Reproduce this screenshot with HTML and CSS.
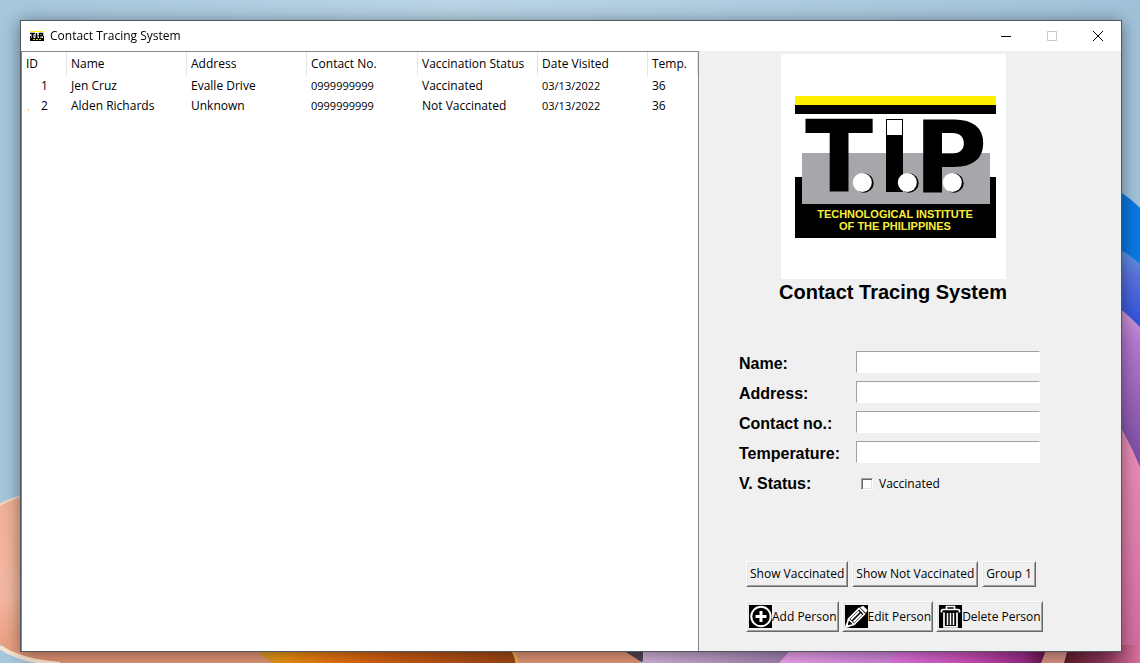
FILE: index.html
```html
<!DOCTYPE html>
<html lang="en">
<head>
<meta charset="utf-8">
<title>Contact Tracing System</title>
<link rel="stylesheet" href="styles.css">
</head>
<body>
<svg class="wallpaper" viewBox="0 0 1140 663" preserveAspectRatio="none" aria-hidden="true">
  <defs>
    <linearGradient id="sky" x1="0" y1="0" x2="1" y2="0">
      <stop offset="0" stop-color="#a5c6dc"/><stop offset=".4" stop-color="#b9d4e6"/><stop offset="1" stop-color="#a0c2d9"/>
    </linearGradient>
    <linearGradient id="violet" x1="0" y1="0" x2="0" y2="1">
      <stop offset="0" stop-color="#e0a8d8"/><stop offset=".25" stop-color="#b478d0"/><stop offset="1" stop-color="#74479c"/>
    </linearGradient>
    <linearGradient id="indigo" x1="0" y1="0" x2="0" y2="1">
      <stop offset="0" stop-color="#62a8e6"/><stop offset=".35" stop-color="#5a72dc"/><stop offset="1" stop-color="#2348e0"/>
    </linearGradient>
    <linearGradient id="pink" x1="0" y1="0" x2="0" y2="1">
      <stop offset="0" stop-color="#f094bc"/><stop offset="1" stop-color="#cf6a9c"/>
    </linearGradient>
    <linearGradient id="peach" x1="0" y1="0" x2="0" y2="1">
      <stop offset="0" stop-color="#f0b094"/><stop offset=".6" stop-color="#f4b8a2"/><stop offset="1" stop-color="#e89878"/>
    </linearGradient>
    <linearGradient id="orange" x1="0" y1="0" x2="1" y2="0">
      <stop offset="0" stop-color="#d8a030"/><stop offset=".12" stop-color="#ee9410"/><stop offset=".3" stop-color="#e87410"/><stop offset=".55" stop-color="#cc5c12"/><stop offset="1" stop-color="#9c4616"/>
    </linearGradient>
    <linearGradient id="lilac" x1="0" y1="0" x2="1" y2="0">
      <stop offset="0" stop-color="#d4b4dc"/><stop offset="1" stop-color="#a07cac"/>
    </linearGradient>
    <linearGradient id="orchid" x1="0" y1="0" x2="1" y2="0">
      <stop offset="0" stop-color="#f0a4f0"/><stop offset="1" stop-color="#cc7ed4"/>
    </linearGradient>
    <linearGradient id="magenta" x1="0" y1="0" x2="1" y2="0">
      <stop offset="0" stop-color="#e478e4"/><stop offset=".5" stop-color="#cc50b8"/><stop offset=".85" stop-color="#9c2c88"/><stop offset="1" stop-color="#601040"/>
    </linearGradient>
    <linearGradient id="maroon" x1="0" y1="0" x2="1" y2="0">
      <stop offset="0" stop-color="#5c1c28"/><stop offset=".5" stop-color="#8c3458"/><stop offset="1" stop-color="#d8709c"/>
    </linearGradient>
  </defs>
  <rect width="1140" height="663" fill="url(#sky)"/>
  <path d="M1100 182Q1125 192 1140 208V270H1100Z" fill="#0a78e2"/>
  <path d="M1100 240Q1122 248 1140 264V340H1100Z" fill="url(#indigo)"/>
  <path d="M1100 295Q1122 308 1140 327V480H1100Z" fill="url(#violet)"/>
  <path d="M1100 395Q1125 430 1140 467V663H1100Z" fill="url(#pink)"/>
  <path d="M0 505Q12 497 40 492V663H55Q20 660 0 644Z" fill="url(#peach)"/>
  <path d="M0 505Q12 497 40 492" fill="none" stroke="#f6d8c4" stroke-width="2"/>
  <path d="M20 645H640V663H55Q35 661 20 654Z" fill="#e29474"/>
  <path d="M0 647Q20 661 60 664" fill="none" stroke="#fae6d0" stroke-width="4"/>
  <path d="M252 645Q262 658 274 663H517Q516 655 510 645Z" fill="url(#orange)"/>
  <path d="M510 645Q516 655 517 663" fill="none" stroke="#f0b050" stroke-width="3"/>
  <path d="M615 645L643 663V645Z" fill="#544454"/>
  <path d="M647 645L642 663H782L795 645Z" fill="url(#lilac)"/>
  <path d="M795 645L779 663H890L906 645Z" fill="url(#orchid)"/>
  <path d="M906 645L888 663H1042L1048 645Z" fill="url(#magenta)"/>
  <path d="M1048 645L1041 663H1064L1069 645Z" fill="#d89084"/>
  <path d="M1069 645L1064 663H1140V645Z" fill="url(#maroon)"/>
</svg>

<div class="window">
  <header class="titlebar">
    <svg class="app-icon" viewBox="0 0 14 12" aria-hidden="true">
      <rect y="1" width="14" height="1" fill="#fff000"/>
      <rect y="6" width="14" height="5"/><rect x="1" y="5" width="12" height="3" fill="#a7a7ab"/>
      <path d="M0 3.500h5M2.500 3v5M6.500 3v5M9.500 8V3.500h3v2h-3" fill="none" stroke="#000" stroke-width="1.500"/>
      <path d="M4 7.500h1M8 7.500h1M12 7.500h1" stroke="#fff"/><path d="M3 9.500h8" stroke="#e8dc20" stroke-dasharray="2 1"/>
    </svg>
    <h1 class="window-title">Contact Tracing System</h1>
    <div class="window-controls">
      <button class="control" aria-label="Minimize"><svg viewBox="0 0 10 10"><path d="M0 5.500h10"/></svg></button>
      <button class="control" aria-label="Maximize" disabled><svg viewBox="0 0 10 10"><path d="M.5.5h9v9h-9z"/></svg></button>
      <button class="control" aria-label="Close"><svg viewBox="0 0 10 10"><path d="M0 0l10 10M10 0L0 10"/></svg></button>
    </div>
  </header>

  <main class="content">
    <section class="records">
      <table class="people">
        <colgroup><col class="col-id"><col class="col-wide"><col class="col-wide"><col class="col-contact"><col class="col-wide"><col class="col-date"><col class="col-temp"></colgroup>
        <thead>
          <tr><th>ID</th><th>Name</th><th>Address</th><th>Contact No.</th><th>Vaccination Status</th><th>Date Visited</th><th>Temp.</th></tr>
        </thead>
        <tbody>
          <tr><td>1</td><td>Jen Cruz</td><td>Evalle Drive</td><td class="digits">0999999999</td><td>Vaccinated</td><td class="digits">03/13/2022</td><td>36</td></tr>
          <tr class="marked"><td>2</td><td>Alden Richards</td><td>Unknown</td><td class="digits">0999999999</td><td>Not Vaccinated</td><td class="digits">03/13/2022</td><td>36</td></tr>
        </tbody>
      </table>
    </section>

    <aside class="panel">
      <svg class="logo" viewBox="0 0 225 225" role="img" aria-label="Technological Institute of the Philippines">
        <rect width="225" height="225" fill="#fff"/>
        <rect x="14" y="42" width="201" height="9" fill="#fff000"/>
        <rect x="14" y="51" width="201" height="9"/>
        <rect x="14" y="123" width="201" height="61"/>
        <rect x="21" y="99" width="188" height="51" fill="#a7a7ab"/>
        <text class="logo-letter" x="24" y="138">T</text>
        <rect x="105" y="65" width="17" height="73"/>
        <rect x="106" y="66" width="15" height="15" fill="#fff"/>
        <text class="logo-letter" x="133" y="138">P</text>
        <g><circle cx="83" cy="129" r="9.700"/><circle cx="128" cy="129" r="9.700"/><circle cx="173" cy="129" r="9.700"/></g>
        <g fill="#fff"><circle cx="81.300" cy="128.500" r="9.500"/><circle cx="126.300" cy="128.500" r="9.500"/><circle cx="171.300" cy="128.500" r="9.500"/></g>
        <text class="logo-name" x="114" y="164">TECHNOLOGICAL INSTITUTE</text>
        <text class="logo-name" x="114" y="176">OF THE PHILIPPINES</text>
      </svg>
      <h2 class="panel-title">Contact Tracing System</h2>

      <form class="form">
        <label for="name">Name:</label><input class="field" id="name" type="text">
        <label for="address">Address:</label><input class="field" id="address" type="text">
        <label for="contact">Contact no.:</label><input class="field" id="contact" type="text">
        <label for="temperature">Temperature:</label><input class="field" id="temperature" type="text">
        <span class="status-label">V. Status:</span>
        <label class="check"><input class="checkbox" type="checkbox">Vaccinated</label>
      </form>

      <div class="actions">
        <div class="filters">
          <button class="button">Show Vaccinated</button>
          <button class="button">Show Not Vaccinated</button>
          <button class="button">Group 1</button>
        </div>
        <div class="edits">
          <button class="button with-icon">
            <svg viewBox="0 0 23 23" aria-hidden="true"><rect width="23" height="23"/><circle cx="12" cy="11.500" r="9.700" fill="none" stroke="#fff" stroke-width="2"/><path d="M12 6v11M6.500 11.500h11" stroke="#fff" stroke-width="3"/></svg>Add Person</button>
          <button class="button with-icon">
            <svg viewBox="0 0 23 23" aria-hidden="true"><rect width="23" height="23"/><path d="M15 2.500L18 .8L22.500 5L21 8Z" fill="#fff"/><path d="M1.500 21.500L3.500 14L14 3.500L19.500 9L9 19.500ZM3.500 14L9 19.500" fill="none" stroke="#fff" stroke-width="1.600"/><path d="M6 14.500L14 6.500M8.500 17L16.500 9" stroke="#fff" stroke-width="1.800"/><path d="M0 23l1-5 4 4z" fill="#fff"/></svg>Edit Person</button>
          <button class="button with-icon">
            <svg viewBox="0 0 23 23" aria-hidden="true"><rect width="23" height="23"/><path d="M2.500 7.500V5.500Q2.500 4.500 4 4.500H19Q20.500 4.500 20.500 5.500V7.500M7.500 4V1.500H15.500V4M5 7.500V21.800H18V7.500" fill="none" stroke="#fff" stroke-width="1.700"/><path d="M8.500 8V20M11.500 8V20M14.500 8V20" stroke="#fff" stroke-width="1.500"/></svg>Delete Person</button>
        </div>
      </div>
    </aside>
  </main>
</div>
</body>
</html>
```
FILE: styles.css
```css
* {
  box-sizing: border-box;
}

body {
  margin: 0;
  min-height: 100vh;
  padding: 20px 19px 11px 20px;
  display: flex;
  font: 12px/16px "Open Sans", "Noto Sans", sans-serif;
  color: #000;
}

/* Desktop picture behind the window */
.wallpaper {
  position: fixed;
  inset: 0;
  width: 100%;
  height: 100%;
  z-index: -1;
}

.window {
  flex: 1;
  display: flex;
  flex-direction: column;
  border: 1px solid #50585f;
  background: #fff;
  box-shadow: 0 2px 16px rgba(0, 0, 0, 0.45);
}

.titlebar {
  display: flex;
  align-items: center;
  height: 30px;
  padding-left: 9px;
  gap: 6px;
}

.app-icon {
  width: 14px;
  height: 12px;
}

.window-title {
  margin: 0;
  font-size: 12px;
  font-weight: 400;
}

.window-controls {
  display: flex;
  align-self: stretch;
  margin-left: auto;
}

.control {
  display: grid;
  place-items: center;
  width: 46px;
  padding: 0;
  border: 0;
  background: none;
}

.control svg {
  width: 10px;
  height: 10px;
  fill: none;
  stroke: #000;
}

.control:disabled svg {
  stroke: #c8c8c8;
}

.content {
  flex: 1;
  display: flex;
  background: #f0f0f0;
}

.records {
  flex: 1;
  border: 1px solid #828790;
  border-bottom: 0;
  background: #fff;
}

.people {
  width: 100%;
  table-layout: fixed;
  border-spacing: 0;
}

.col-id { width: 45px; }
.col-wide { width: 120px; }
.col-contact { width: 111px; }
.col-date { width: 110px; }
.col-temp { width: 50px; }

.people th,
.people td {
  padding: 0 4px;
  font-weight: 400;
  text-align: left;
  white-space: nowrap;
}

.people th {
  height: 24px;
  border-right: 1px solid #e5e5e5;
}

.people td {
  height: 20px;
}

.people td:first-child {
  padding-left: 19px;
}

.people .digits {
  font-size: 11px;
}

.marked td:first-child {
  background: linear-gradient(#f8c070, #f8c070) 6px 13px / 1px 2px no-repeat;
}

.panel {
  width: 422px;
  display: flex;
  flex-direction: column;
  padding: 3px 40px 19px;
}

.logo {
  align-self: center;
  width: 225px;
  height: 225px;
  margin-right: 34px;
}

.logo-letter {
  font: bold 100px "DejaVu Sans", sans-serif;
}

.logo-name {
  font: bold 11px "Liberation Sans", Arial, sans-serif;
  fill: #f8ee38;
  text-anchor: middle;
}

.panel-title {
  margin: 0 34px 0 0;
  font: bold 20px/26px "Liberation Sans", Arial, sans-serif;
  text-align: center;
  white-space: nowrap;
}

.form {
  display: grid;
  grid-template-columns: 117px 184px;
  grid-auto-rows: 22px;
  row-gap: 8px;
  margin-top: 46px;
  font: bold 16px/26px "Liberation Sans", Arial, sans-serif;
}

.field {
  width: 100%;
  height: 22px;
  padding: 1px 2px;
  border: 1px solid #fff;
  border-top-color: #a0a0a0;
  border-left-color: #a0a0a0;
  background: #fff;
  font: 12px "Open Sans", sans-serif;
}

.check {
  display: flex;
  align-items: center;
  gap: 6px;
  padding: 3px 0 0 5px;
  font: 12px/16px "Open Sans", "Noto Sans", sans-serif;
}

.checkbox {
  appearance: none;
  width: 12px;
  height: 12px;
  margin: 0;
  border: 1px solid #fff;
  border-top-color: #a0a0a0;
  border-left-color: #a0a0a0;
  background: #fff;
  box-shadow: inset 1px 1px #696969, inset -1px -1px #e3e3e3;
}

.checkbox:checked {
  background: radial-gradient(#000 3px, #fff 3px);
}

.actions {
  display: grid;
  gap: 14px;
  margin-top: auto;
  padding-left: 7px;
}

.filters,
.edits {
  display: flex;
  gap: 4px;
}

.edits {
  gap: 3px;
}

.button {
  display: flex;
  align-items: center;
  height: 26px;
  padding: 0 3px;
  border: 1px solid #696969;
  border-top-color: #fff;
  border-left-color: #fff;
  background: #f0f0f0;
  box-shadow: inset 1px 1px #e3e3e3, inset -1px -1px #a0a0a0;
  font: 12px/16px "Open Sans", "Noto Sans", sans-serif;
  color: #000;
  white-space: nowrap;
}

.with-icon {
  height: 31px;
  padding: 0 1px 0 2px;
}

.with-icon svg {
  width: 23px;
  height: 23px;
}
```
